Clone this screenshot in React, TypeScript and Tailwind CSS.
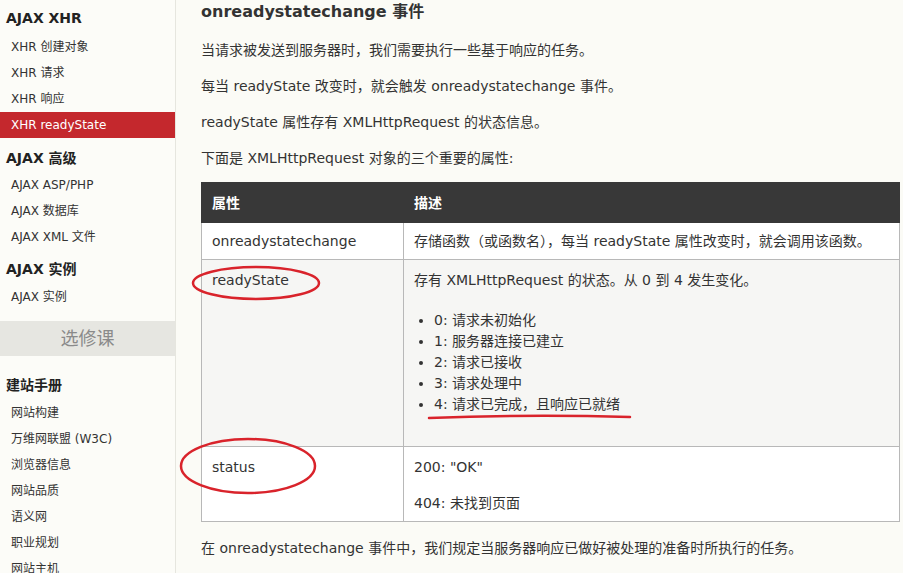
const SIDEBAR = [
  { type: "h", text: "AJAX XHR", mt: "mt-[5px]" },
  { type: "i", text: "XHR 创建对象", mt: "mt-[3px]" },
  { type: "i", text: "XHR 请求" },
  { type: "i", text: "XHR 响应" },
  { type: "a", text: "XHR readyState" },
  { type: "h", text: "AJAX 高级", mt: "mt-[7px]" },
  { type: "i", text: "AJAX ASP/PHP", mt: "mt-px" },
  { type: "i", text: "AJAX 数据库" },
  { type: "i", text: "AJAX XML 文件" },
  { type: "h", text: "AJAX 实例", mt: "mt-[6px]" },
  { type: "i", text: "AJAX 实例", mt: "mt-[2px]" },
];

const MANUAL = ["网站构建", "万维网联盟 (W3C)", "浏览器信息", "网站品质", "语义网", "职业规划", "网站主机"];

const STATES = ["0: 请求未初始化", "1: 服务器连接已建立", "2: 请求已接收", "3: 请求处理中", "4: 请求已完成，且响应已就绪"];

function Sidebar() {
  return (
    <div className="w-[176px] shrink-0 h-[573px] overflow-hidden bg-[#fcfcf8] border-r border-[#e6e6df] flex flex-col">
      {SIDEBAR.map((it) =>
        it.type === "h" ? (
          <div key={it.text} className={`${it.mt ?? ""} h-[26px] shrink-0 flex items-center pl-[6px] text-[14px] font-bold text-[#222]`}>
            {it.text}
          </div>
        ) : it.type === "a" ? (
          <div key={it.text} className="h-[26px] shrink-0 flex items-center pl-[11px] text-[12px] text-white bg-[#c4282d]">
            {it.text}
          </div>
        ) : (
          <div key={it.text} className={`${it.mt ?? ""} h-[26px] shrink-0 flex items-center pl-[11px] text-[12px] text-[#333]`}>
            {it.text}
          </div>
        )
      )}
      <div className="mt-[11px] h-[35px] shrink-0 flex items-center justify-center bg-[#e6e6e1] text-[18px] text-[#8a8a8a]">
        选修课
      </div>
      <div className="mt-[16px] h-[26px] shrink-0 flex items-center pl-[6px] text-[14px] font-bold text-[#222]">建站手册</div>
      <div className="mt-[2px] flex flex-col">
        {MANUAL.map((m) => (
          <div key={m} className="h-[26px] shrink-0 flex items-center pl-[11px] text-[12px] text-[#333]">
            {m}
          </div>
        ))}
      </div>
    </div>
  );
}

export default function App() {
  return (
    <div className="relative w-[903px] h-[573px] overflow-hidden flex bg-[#fbfbf6] text-[#333] font-['DejaVu_Sans','Noto_Sans_CJK_SC',sans-serif]">
      <Sidebar />

      <div className="flex-1 pl-[25px] flex flex-col text-[14px] leading-[22px]">
        <h2 className="h-[24px] flex items-center text-[16px] font-bold text-[#333]">onreadystatechange 事件</h2>
        <p className="mt-[15px]">当请求被发送到服务器时，我们需要执行一些基于响应的任务。</p>
        <p className="mt-[14px]">每当 readyState 改变时，就会触发 onreadystatechange 事件。</p>
        <p className="mt-[14px]">readyState 属性存有 XMLHttpRequest 的状态信息。</p>
        <p className="mt-[14px]">下面是 XMLHttpRequest 对象的三个重要的属性:</p>

        <table className="mt-[13px] w-[699px] border-collapse table-fixed">
          <thead>
            <tr className="bg-[#383838] text-white h-[40px]">
              <th className="w-[202px] text-left font-bold px-[10px] border border-[#383838]">属性</th>
              <th className="text-left font-bold px-[10px] border border-[#383838]">描述</th>
            </tr>
          </thead>
          <tbody>
            <tr className="bg-white">
              <td className="border border-[#b8b8b8] px-[10px] py-[7px] align-top">onreadystatechange</td>
              <td className="border border-[#b8b8b8] px-[10px] py-[7px] align-top whitespace-nowrap">
                存储函数（或函数名），每当 readyState 属性改变时，就会调用该函数。
              </td>
            </tr>
            <tr className="bg-[#f6f6f4]">
              <td className="border border-[#b8b8b8] px-[10px] pt-[9px] align-top">readyState</td>
              <td className="border border-[#b8b8b8] px-[10px] pt-[9px] pb-[31px] align-top">
                <p>存有 XMLHttpRequest 的状态。从 0 到 4 发生变化。</p>
                <ul className="mt-[19px] list-disc pl-[20px] leading-[21px]">
                  {STATES.map((s) => (
                    <li key={s}>{s}</li>
                  ))}
                </ul>
              </td>
            </tr>
            <tr className="bg-white">
              <td className="border border-[#b8b8b8] px-[10px] pt-[9px] align-top">status</td>
              <td className="border border-[#b8b8b8] px-[10px] pt-[9px] pb-[7px] align-top">
                <p>200: "OK"</p>
                <p className="mt-[14px]">404: 未找到页面</p>
              </td>
            </tr>
          </tbody>
        </table>

        <p className="mt-[15px]">在 onreadystatechange 事件中，我们规定当服务器响应已做好被处理的准备时所执行的任务。</p>
      </div>

      {/* red hand-drawn marks over the table */}
      <svg className="absolute inset-0 pointer-events-none" width="903" height="573" viewBox="0 0 903 573">
        <ellipse cx="256" cy="283" rx="63" ry="16" fill="none" stroke="#d9232b" strokeWidth="2.5" />
        <ellipse cx="248" cy="466" rx="67" ry="27" fill="none" stroke="#d9232b" strokeWidth="2.5" />
        <path d="M429 418 Q530 414 630 417" fill="none" stroke="#d9232b" strokeWidth="2.5" strokeLinecap="round" />
      </svg>
    </div>
  );
}
